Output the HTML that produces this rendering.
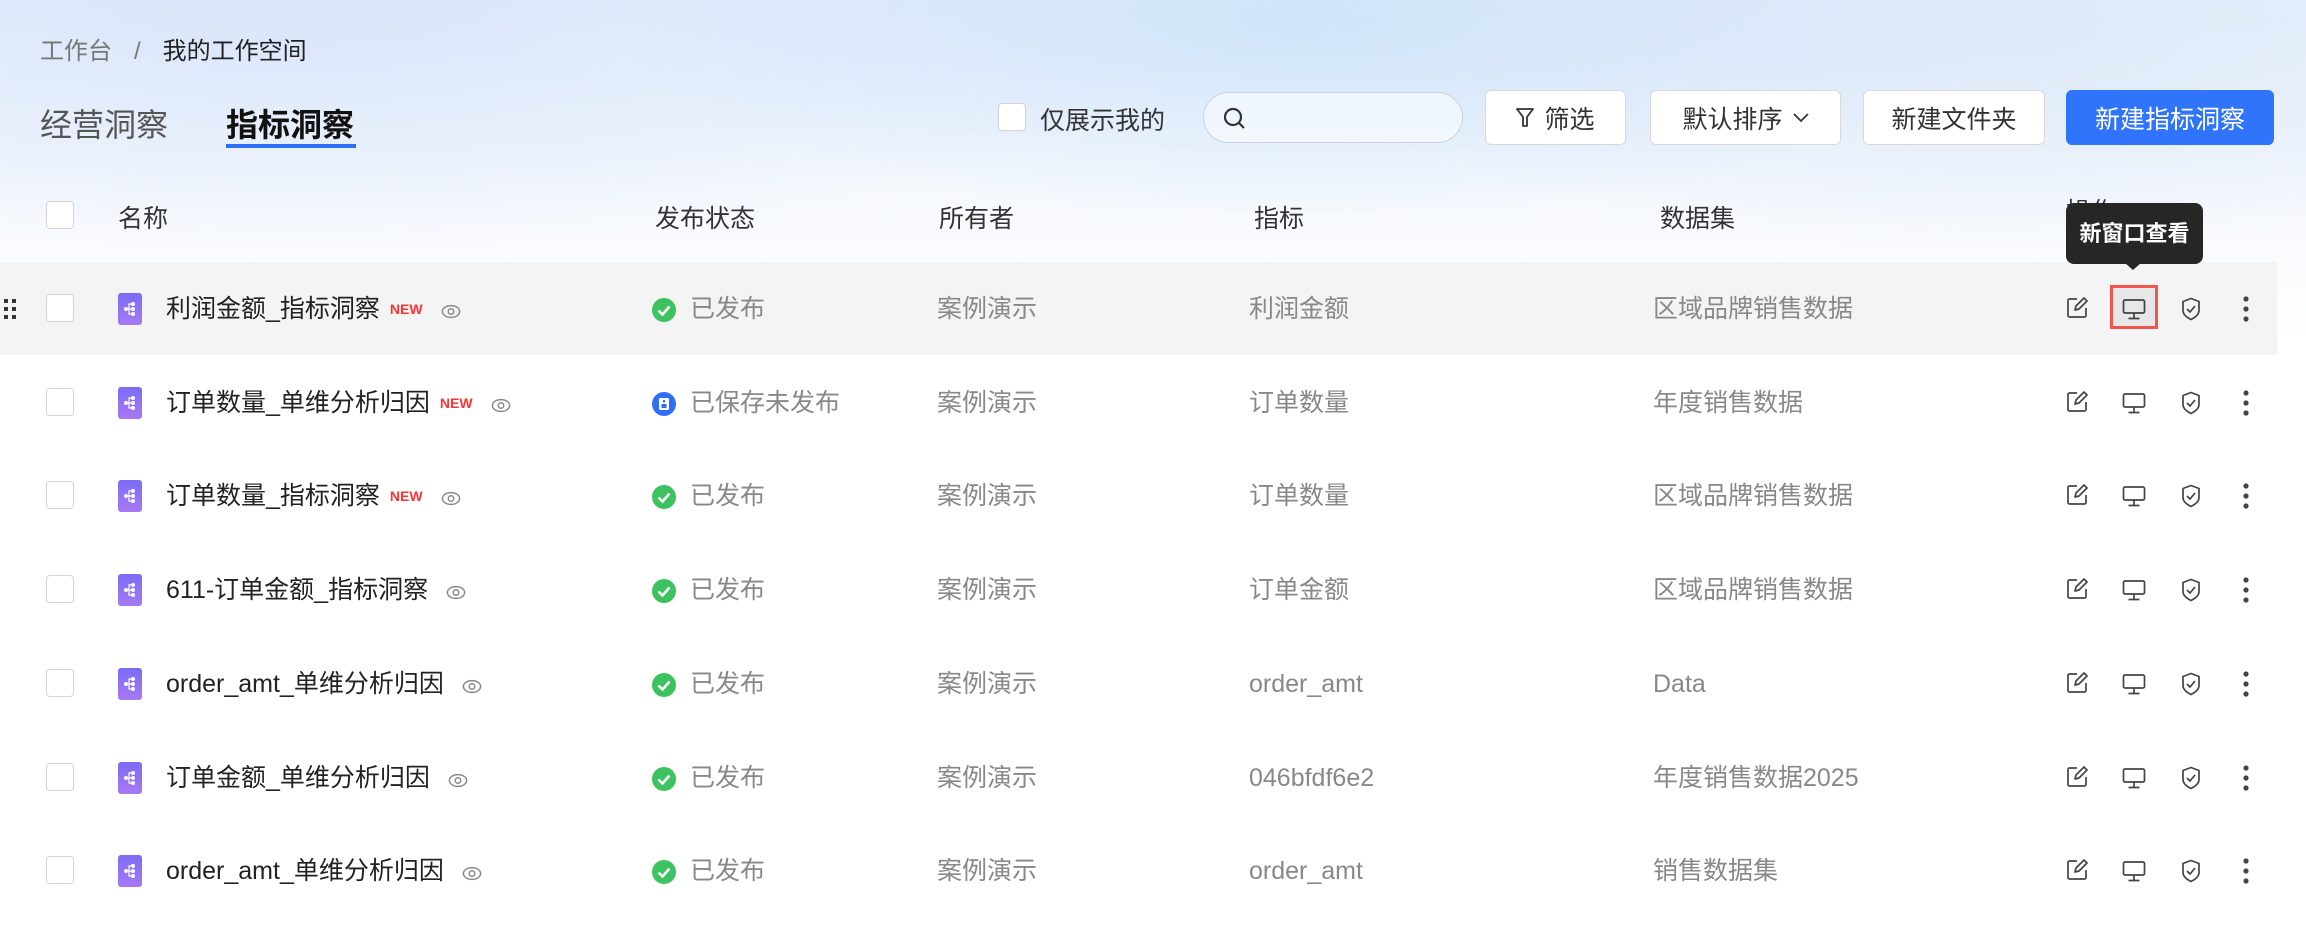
<!DOCTYPE html>
<html><head><meta charset="utf-8">
<style>
*{box-sizing:border-box;margin:0;padding:0}
body{width:2306px;height:940px;overflow:hidden;background:#fff;font-family:"Liberation Sans","Noto Sans CJK SC",sans-serif;position:relative}
.bg{position:absolute;left:0;top:0;width:2306px;height:340px;
background:
radial-gradient(ellipse 700px 200px at 1300px 20px,rgba(200,225,250,.8),rgba(255,255,255,0)),
radial-gradient(ellipse 900px 250px at 300px 0px,rgba(215,228,250,.9),rgba(255,255,255,0)),
radial-gradient(ellipse 700px 220px at 2000px 30px,rgba(220,232,248,.9),rgba(255,255,255,0)),
linear-gradient(#e9f0fb,#fff 100%)}
.a{position:absolute;white-space:nowrap}
.crumb{top:31px;font-size:24px;color:#777}
.tab{top:100px;font-size:32px;color:#555}
.btn{position:absolute;top:90px;height:55px;border:1px solid #d9d9d9;border-radius:6px;background:#fff;font-size:25px;color:#333;display:flex;align-items:center;justify-content:center;gap:10px}
.cb{position:absolute;width:28px;height:28px;border:1.5px solid #d4d4d4;border-radius:4px;background:#fff}
.hd{top:199px;font-size:25px;color:#333}
.row{position:absolute;left:0;width:2277px;height:93px}
.row .t{position:absolute;top:31px;font-size:25px;white-space:nowrap;line-height:32px}
.nm{left:166px;color:#222}
.g{color:#888}
.ic{position:absolute;left:118px;top:31px;width:24px;height:32px;border-radius:3px;background:linear-gradient(#7a6cf6,#a779f3)}
.new{color:#f33;font-size:14px;font-weight:bold;margin-left:10px;vertical-align:3px}
.eye{display:inline-block;vertical-align:-2px;margin-left:18px}
.st{position:absolute;left:652px;top:36px}
.act{position:absolute;top:35px}
</style></head><body>
<div class="bg"></div>
<div class="a crumb" style="left:40px">工作台<span style="margin:0 22px">/</span><span style="color:#222">我的工作空间</span></div>
<div class="a tab" style="left:40px">经营洞察</div>
<div class="a tab" style="left:226px;color:#111;font-weight:bold">指标洞察</div>
<div class="a" style="left:226px;top:144px;width:130px;height:4px;background:#2f6ff5"></div>

<div class="cb" style="left:998px;top:103px"></div>
<div class="a" style="left:1040px;top:101px;font-size:25px;color:#333">仅展示我的</div>
<div class="a" style="left:1203px;top:92px;width:260px;height:51px;border:1px solid #c9d2de;border-radius:26px;background:rgba(255,255,255,.5)">
<svg style="position:absolute;left:18px;top:13px" width="26" height="26" viewBox="0 0 26 26"><circle cx="11" cy="11" r="8" fill="none" stroke="#333" stroke-width="2.2"/><path d="M17 17l5 5" stroke="#333" stroke-width="2.2"/></svg></div>
<div class="btn" style="left:1485px;width:141px"><svg width="18" height="22" viewBox="0 0 18 22"><path d="M1 2h16l-6 8v9h-4v-9z" fill="none" stroke="#333" stroke-width="1.8" stroke-linejoin="round"/></svg>筛选</div>
<div class="btn" style="left:1650px;width:191px">默认排序<svg width="16" height="10" viewBox="0 0 16 10"><path d="M1 1l7 7 7-7" fill="none" stroke="#333" stroke-width="1.8"/></svg></div>
<div class="btn" style="left:1863px;width:182px">新建文件夹</div>
<div class="btn" style="left:2066px;width:208px;background:#2f74fb;border-color:#2f74fb;color:#fff">新建指标洞察</div>

<div class="cb" style="left:46px;top:201px"></div>
<div class="a hd" style="left:118px">名称</div>
<div class="a hd" style="left:655px">发布状态</div>
<div class="a hd" style="left:939px">所有者</div>
<div class="a hd" style="left:1254px">指标</div>
<div class="a hd" style="left:1660px">数据集</div>
<div class="a hd" style="left:2066px;top:192px">操作</div>

<div id="rows"></div>
<script>
const data=[
["利润金额_指标洞察",1,1,"利润金额","区域品牌销售数据"],
["订单数量_单维分析归因",1,0,"订单数量","年度销售数据"],
["订单数量_指标洞察",1,1,"订单数量","区域品牌销售数据"],
["611-订单金额_指标洞察",0,1,"订单金额","区域品牌销售数据"],
["order_amt_单维分析归因",0,1,"order_amt","Data"],
["订单金额_单维分析归因",0,1,"046bfdf6e2","年度销售数据2025"],
["order_amt_单维分析归因",0,1,"order_amt","销售数据集"]];
const eye='<svg class="eye" width="20" height="15" viewBox="0 0 22 16"><ellipse cx="11" cy="8" rx="9.5" ry="6.5" fill="none" stroke="#888" stroke-width="1.6"/><circle cx="11" cy="8" r="3" fill="none" stroke="#888" stroke-width="1.6"/></svg>';
const ok='<svg width="24" height="24" viewBox="0 0 24 24"><circle cx="12" cy="12" r="12" fill="#3cc35f"/><path d="M6.5 12.5l4 4 7-8" fill="none" stroke="#fff" stroke-width="2.6"/></svg>';
const sv='<svg width="24" height="24" viewBox="0 0 24 24"><circle cx="12" cy="12" r="12" fill="#2f6ff5"/><rect x="7" y="6" width="10" height="12" rx="1.5" fill="#fff"/><rect x="9.5" y="12" width="5" height="4" fill="#2f6ff5"/><rect x="11" y="8" width="2" height="2.5" fill="#2f6ff5"/></svg>';
const node='<svg width="24" height="32" viewBox="0 0 24 32"><circle cx="8" cy="16" r="2" fill="#fff"/><circle cx="15" cy="11" r="2" fill="#fff"/><circle cx="15" cy="16" r="2" fill="#fff"/><circle cx="15" cy="21" r="2" fill="#fff"/><path d="M8 16h7M11 16v-5h4M11 16v5h4" stroke="#fff" stroke-width="1.2" fill="none"/></svg>';
const edit='<svg width="22" height="22" viewBox="0 0 22 22"><path d="M11 2H3.5A1.5 1.5 0 0 0 2 3.5v15A1.5 1.5 0 0 0 3.5 20h15a1.5 1.5 0 0 0 1.5-1.5V11" fill="none" stroke="#444" stroke-width="1.7"/><path d="M9 13l1-4 8-8 3 3-8 8z" fill="none" stroke="#444" stroke-width="1.7" stroke-linejoin="round"/></svg>';
const mon='<svg width="24" height="22" viewBox="0 0 24 22"><rect x="1.5" y="2" width="21" height="13" rx="1.5" fill="none" stroke="#444" stroke-width="1.7"/><path d="M12 15v5M6.5 20.5h11" stroke="#444" stroke-width="1.7"/></svg>';
const sh='<svg width="20" height="24" viewBox="0 0 20 24"><path d="M10 1.5l8 3v9c0 4-4 7-8 9-4-2-8-5-8-9v-9z" fill="none" stroke="#444" stroke-width="1.7" stroke-linejoin="round"/><path d="M6 12l3 3 5-6" fill="none" stroke="#444" stroke-width="1.7"/></svg>';
const dots='<svg width="6" height="26" viewBox="0 0 6 26"><circle cx="3" cy="3" r="2.6" fill="#444"/><circle cx="3" cy="13" r="2.6" fill="#444"/><circle cx="3" cy="23" r="2.6" fill="#444"/></svg>';
let h='';
data.forEach((d,i)=>{
 const top=262+i*93.7;
 h+=`<div class="row" style="top:${top}px;${i==0?'background:#f4f4f4':''}">`;
 if(i==0)h+=`<svg style="position:absolute;left:3px;top:36px" width="14" height="22" viewBox="0 0 14 22"><g fill="#333"><rect x="1" y="1" width="4" height="4"/><rect x="9" y="1" width="4" height="4"/><rect x="1" y="9" width="4" height="4"/><rect x="9" y="9" width="4" height="4"/><rect x="1" y="17" width="4" height="4"/><rect x="9" y="17" width="4" height="4"/></g></svg>`;
 h+=`<div class="cb" style="left:46px;top:32px"></div><div class="ic">${node}</div>`;
 h+=`<div class="t nm">${d[0]}${d[1]?'<span class="new">NEW</span>':''}${eye}</div>`;
 h+=`<div class="st">${d[2]?ok:sv}</div><div class="t g" style="left:690px">${d[2]?'已发布':'已保存未发布'}</div>`;
 h+=`<div class="t g" style="left:937px">案例演示</div><div class="t g" style="left:1249px">${d[3]}</div><div class="t g" style="left:1653px">${d[4]}</div>`;
 h+=`<div class="act" style="left:2066px">${edit}</div><div class="act" style="left:2122px;top:36px">${mon}</div><div class="act" style="left:2181px">${sh}</div><div class="act" style="left:2243px;top:34px">${dots}</div>`;
 h+='</div>';
});
document.getElementById('rows').innerHTML=h;
</script>
<div class="a" style="left:2110px;top:285px;width:48px;height:44px;border:3px solid #f0574a;background:rgba(0,0,0,.05)"></div>
<div class="a" style="left:2066px;top:203px;width:137px;height:61px;background:#262626;border-radius:8px;color:#fff;font-size:22px;font-weight:bold;text-align:center;line-height:61px">新窗口查看</div>
<div class="a" style="left:2125px;top:263px;width:0;height:0;border-left:8px solid transparent;border-right:8px solid transparent;border-top:7px solid #262626"></div>
</body></html>
